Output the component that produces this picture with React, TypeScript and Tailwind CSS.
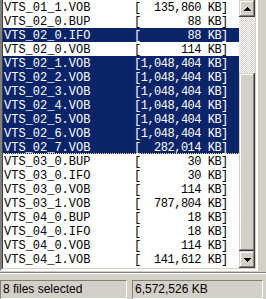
const files: [string, string, boolean][] = [
  ["VTS_01_1.VOB", "[  135,860 KB]", false],
  ["VTS_02_0.BUP", "[       88 KB]", false],
  ["VTS_02_0.IFO", "[       88 KB]", true],
  ["VTS_02_0.VOB", "[      114 KB]", false],
  ["VTS_02_1.VOB", "[1,048,404 KB]", true],
  ["VTS_02_2.VOB", "[1,048,404 KB]", true],
  ["VTS_02_3.VOB", "[1,048,404 KB]", true],
  ["VTS_02_4.VOB", "[1,048,404 KB]", true],
  ["VTS_02_5.VOB", "[1,048,404 KB]", true],
  ["VTS_02_6.VOB", "[1,048,404 KB]", true],
  ["VTS_02_7.VOB", "[  282,014 KB]", true],
  ["VTS_03_0.BUP", "[       30 KB]", false],
  ["VTS_03_0.IFO", "[       30 KB]", false],
  ["VTS_03_0.VOB", "[      114 KB]", false],
  ["VTS_03_1.VOB", "[  787,804 KB]", false],
  ["VTS_04_0.BUP", "[       18 KB]", false],
  ["VTS_04_0.IFO", "[       18 KB]", false],
  ["VTS_04_0.VOB", "[      114 KB]", false],
  ["VTS_04_1.VOB", "[  141,612 KB]", false],
];

const raised =
  "bg-[#d4d0c8] shadow-[inset_-1px_-1px_#404040,inset_1px_1px_#d4d0c8,inset_-2px_-2px_#808080,inset_2px_2px_#ffffff]";

function Arrow({ up }: { up?: boolean }) {
  return (
    <div className={`flex h-[17px] w-4 items-center justify-center ${raised}`}>
      <svg width="7" height="4" viewBox="0 0 7 4" className={up ? "" : "rotate-180"}>
        <path d="M3 0h1v1h1v1h1v1h1v1H0V3h1V2h1V1h1z" fill="#000" />
      </svg>
    </div>
  );
}

export default function App() {
  return (
    <div className="flex h-[299px] w-[266px] flex-col overflow-hidden bg-[#d4d0c8] font-['Liberation_Sans',Arial,sans-serif]">
      <div className="flex h-[271px] w-[258px] border-b-2 border-l-2 border-r-2 border-b-white border-l-[#808080] border-r-white">
        <div className="flex flex-1 border-b border-l border-r border-b-[#d4d0c8] border-l-[#404040] border-r-[#d4d0c8]">
          <div className="flex-1 bg-white font-['Liberation_Mono','Courier_New',monospace] text-[12px] leading-[14px] whitespace-pre">
            {files.map(([name, size, sel], i) => (
              <div
                key={i}
                className={`flex h-[14px] pt-[1px] ${sel ? "bg-[#0a246a] text-white" : "text-black"} ${
                  i === 10 ? "border-b border-dotted border-b-[#f5db95]" : ""
                }`}
              >
                <span className="w-[131px] pl-px">{name}</span>
                <span className="tracking-[-0.5px]">{size}</span>
              </div>
            ))}
          </div>
          <div className="flex w-4 flex-col">
            <Arrow up />
            <div className="h-[56px] bg-[repeating-conic-gradient(#d4d0c8_0_25%,#ffffff_0_50%)] bg-[length:2px_2px]" />
            <div className={`flex-1 ${raised}`} />
            <Arrow />
          </div>
        </div>
      </div>
      <div className="mt-[1px] h-px w-full bg-[#808080]" />
      <div className="h-px w-full bg-white" />
      <div className="mt-[6px] flex h-[19px] gap-[5px] pr-[3px] text-[12px] leading-[17px] text-black">
        <div className="w-[127px] border border-b-white border-l-[#808080] border-r-white border-t-[#808080] pl-[2px]">
          8 files selected
        </div>
        <div className="flex-1 border border-b-white border-l-[#808080] border-r-white border-t-[#808080] pl-[2px]">
          6,572,526 KB
        </div>
      </div>
    </div>
  );
}
